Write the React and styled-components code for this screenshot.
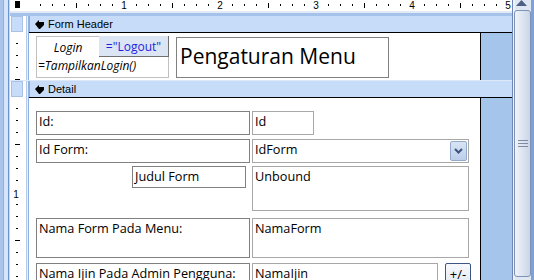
import React from 'react';
import styled, { createGlobalStyle } from 'styled-components';

const GlobalStyle = createGlobalStyle`
  html, body { margin: 0; padding: 0; background: #fff; overflow: hidden; }
  body { font-family: "Liberation Sans", Arial, sans-serif; }
`;

const Window = styled.div`
  width: 534px;
  height: 280px;
  display: flex;
  overflow: hidden;
  background: #fff;
`;

const Edge = styled.div`
  width: 10px;
  flex: none;
  background: linear-gradient(to right,
    #a9c4ec 0 3px, #8fb0e0 3px 4px, #d6e4f7 4px 8px, #6d94d2 8px 9px, #c9d9f0 9px 10px);
`;

const Designer = styled.div`
  flex: 1;
  min-width: 0;
  display: flex;
  flex-direction: column;
`;

const RulerRow = styled.div`
  display: flex;
  height: 11px;
  flex: none;
  border-bottom: 2px solid #e2eaf6;
`;

const Corner = styled.div`
  width: 19px;
  flex: none;
  display: flex;
  justify-content: center;
  padding-top: 1px;
  box-sizing: border-box;
  background: #fff;
`;

const FormSelector = styled.div`
  width: 5px;
  height: 7px;
  background: #000;
  margin-right: 4px;
`;

const HRuler = styled.svg`
  flex: 1;
  height: 11px;
  display: block;
`;

const BarRow = styled.div`
  display: flex;
  flex: none;
  height: ${p => p.$h}px;
  border-top: ${p => p.$top};
  background: #c6dcf8;
`;

const SelectorCell = styled.div`
  width: 19px;
  flex: none;
  box-sizing: border-box;
  padding: 0 6px 0 1px;
  background: linear-gradient(to right, #fff 0 16px, #b6cbea 16px 17px, #e8f0fa 17px 18px, #8fb0e0 18px 19px);
`;

const SelectorBox = styled.div`
  height: 100%;
  box-sizing: border-box;
  background: #c6dcf8;
  border: 1px solid #a9c1e4;
`;

const BarLabel = styled.div`
  flex: 1;
  display: flex;
  align-items: center;
  gap: 3px;
  padding-left: 5px;
  font-size: 11px;
  color: #000;
  border-left: 1px solid #8fb0e0;
`;

const SectionBody = styled.div`
  display: flex;
  flex: none;
  height: ${p => p.$h}px;
`;

const VRuler = styled.svg`
  width: 19px;
  flex: none;
  display: block;
  background: linear-gradient(to right, #fff 0 16px, #b6cbea 16px 17px, #e8f0fa 17px 18px, #8fb0e0 18px 19px);
`;

const Canvas = styled.div`
  flex: 1;
  position: relative;
  border-top: 1px solid #000;
  background: linear-gradient(to right, #fff 0 451px, #000 451px 452px, #a6c5ea 452px);
  font-family: "Open Sans", "Noto Sans", sans-serif;
`;

const Control = styled.div`
  position: absolute;
  left: ${p => p.$x}px;
  top: ${p => p.$y}px;
  width: ${p => p.$w}px;
  height: ${p => p.$h}px;
  box-sizing: border-box;
  border: 1px solid ${p => (p.$kind === 'label' ? '#808080' : '#a8a8a8')};
  font-size: 12.7px;
  line-height: 16px;
  padding: 1px 2px 0 2px;
  color: #000;
  white-space: nowrap;
  overflow: hidden;
`;

const LoginGroup = styled.div`
  position: absolute;
  left: 7px;
  top: 3px;
  width: 133px;
  height: 42px;
  box-sizing: border-box;
  border: 1px solid #c0c0c0;
  display: grid;
  grid-template-columns: 62px 1fr;
  grid-template-rows: 20px 1fr;
  font-size: 12px;
  font-style: italic;
`;

const LoginLabel = styled.div`
  display: flex;
  align-items: center;
  justify-content: center;
`;

const LogoutButton = styled.div`
  display: flex;
  align-items: center;
  justify-content: center;
  background: #dbe5f3;
  color: #1f1fe0;
  font-style: normal;
  font-size: 12px;
  border-right: 1px solid #707070;
  border-bottom: 1px solid #707070;
  margin: -1px -1px 0 0;
`;

const LoginExpr = styled.div`
  grid-column: 1 / span 2;
  padding: 0 1px;
  line-height: 18px;
`;

const Title = styled.div`
  position: absolute;
  left: 147px;
  top: 4px;
  width: 213px;
  height: 41px;
  box-sizing: border-box;
  border: 1px solid #808080;
  font-size: 21px;
  line-height: 36px;
  padding-left: 3px;
`;

const DropButton = styled.div`
  position: absolute;
  right: 1px;
  top: 1px;
  width: 17px;
  height: 20px;
  box-sizing: border-box;
  border: 1px solid #94aacb;
  border-radius: 2px;
  background: linear-gradient(#d8e4f4, #bccfe9);
  display: flex;
  align-items: center;
  justify-content: center;
`;

const CommandButton = styled.div`
  position: absolute;
  left: ${p => p.$x}px;
  top: ${p => p.$y}px;
  width: ${p => p.$w}px;
  height: ${p => p.$h}px;
  box-sizing: border-box;
  border: 1px solid #3d5683;
  border-radius: 2px;
  background: linear-gradient(#f7f9fc, #e1e8f2);
  font-size: 13px;
  line-height: 20px;
  text-align: center;
`;

const Scrollbar = styled.div`
  width: 22px;
  flex: none;
  display: flex;
  flex-direction: column;
  background: linear-gradient(to right, #6f86b6 0 1px, #eef3fa 1px 3px, #dfe7f2 3px 19px, #7da2d8 19px);
`;

const UpArrow = styled.div`
  height: 10px;
  flex: none;
  display: flex;
  justify-content: center;
  padding-right: 3px;
`;

const Thumb = styled.div`
  flex: 1;
  margin: 0 3px 3px 2px;
  border: 1px solid #7d92b9;
  border-radius: 3px;
  background: linear-gradient(to right, #f1f4f9, #dde5f0 50%, #c9d5e6);
  display: flex;
  align-items: center;
  justify-content: center;
`;

const Grip = () => (
  <svg width="10" height="7" viewBox="0 0 10 7">
    <rect x="0" y="0" width="10" height="1" fill="#7f8ba0" />
    <rect x="0" y="3" width="10" height="1" fill="#7f8ba0" />
    <rect x="0" y="6" width="10" height="1" fill="#7f8ba0" />
  </svg>
);

const SectionMark = () => (
  <svg width="10" height="9" viewBox="0 0 10 9">
    <path d="M0 4 L4 0 L4 2 L9 2 L9 5 L5 9 L4 9 Z" fill="#000" />
  </svg>
);

const Chevron = () => (
  <svg width="9" height="6" viewBox="0 0 9 6">
    <path d="M1 1 L4.5 4.5 L8 1" stroke="#3f5580" strokeWidth="2" fill="none" />
  </svg>
);

const TopRuler = () => {
  const ticks = [];
  for (let k = 1; k < 41; k++) {
    const x = -1 + k * 12;
    if (k % 8 === 0) {
      ticks.push(
        <text key={k} x={x} y="9" fontSize="10" textAnchor="middle" fontFamily="Liberation Sans, sans-serif">{k / 8}</text>
      );
    } else if (k % 4 === 0) {
      ticks.push(<rect key={k} x={x} y="3" width="1" height="5" fill="#000" />);
    } else {
      ticks.push(<rect key={k} x={x} y="4" width="1" height="2" fill="#000" />);
    }
  }
  return <HRuler>{ticks}</HRuler>;
};

const SideRuler = ({ h }) => {
  const ticks = [];
  for (let k = 1; k * 12 < h + 4; k++) {
    const y = k * 12 - 1;
    if (k % 8 === 0) {
      ticks.push(
        <text key={k} x="6" y={y + 6} fontSize="10" textAnchor="middle" fontFamily="Liberation Sans, sans-serif">{k / 8}</text>
      );
    } else if (k % 4 === 0) {
      ticks.push(<rect key={k} x="5" y={y} width="5" height="1" fill="#000" />);
    } else {
      ticks.push(<rect key={k} x="6" y={y} width="2" height="1" fill="#000" />);
    }
  }
  return <VRuler height={h}>{ticks}</VRuler>;
};

const SectionBar = ({ title, h, top }) => (
  <BarRow $h={h} $top={top}>
    <SelectorCell><SelectorBox /></SelectorCell>
    <BarLabel><SectionMark />{title}</BarLabel>
  </BarRow>
);

const detailControls = [
  { kind: 'label', text: 'Id:', x: 7, y: 13, w: 214, h: 24 },
  { kind: 'box', text: 'Id', x: 223, y: 13, w: 62, h: 24 },
  { kind: 'label', text: 'Id Form:', x: 7, y: 41, w: 214, h: 24 },
  { kind: 'combo', text: 'IdForm', x: 223, y: 41, w: 217, h: 24 },
  { kind: 'label', text: 'Judul Form', x: 103, y: 68, w: 114, h: 22 },
  { kind: 'box', text: 'Unbound', x: 223, y: 68, w: 217, h: 45 },
  { kind: 'label', text: 'Nama Form Pada Menu:', x: 7, y: 120, w: 214, h: 40 },
  { kind: 'box', text: 'NamaForm', x: 223, y: 120, w: 217, h: 40 },
  { kind: 'label', text: 'Nama Ijin Pada Admin Pengguna:', x: 7, y: 165, w: 214, h: 40 },
  { kind: 'box', text: 'NamaIjin', x: 223, y: 165, w: 186, h: 24 },
];

const App = () => (
  <>
    <GlobalStyle />
    <Window>
      <Edge />
      <Designer>
        <RulerRow>
          <Corner><FormSelector /></Corner>
          <TopRuler />
        </RulerRow>

        <SectionBar title="Form Header" h={16} top="3px solid #a4c2ea" />
        <SectionBody $h={48}>
          <SideRuler h={48} />
          <Canvas>
            <LoginGroup>
              <LoginLabel>Login</LoginLabel>
              <LogoutButton>="Logout"</LogoutButton>
              <LoginExpr>=TampilkanLogin()</LoginExpr>
            </LoginGroup>
            <Title>Pengaturan Menu</Title>
          </Canvas>
        </SectionBody>

        <SectionBar title="Detail" h={16} top="1px solid #dce7f7" />
        <SectionBody $h={200}>
          <SideRuler h={200} />
          <Canvas>
            {detailControls.map(c => (
              <Control key={c.text} $kind={c.kind} $x={c.x} $y={c.y} $w={c.w} $h={c.h}>
                {c.text}
                {c.kind === 'combo' && <DropButton><Chevron /></DropButton>}
              </Control>
            ))}
            <CommandButton $x={416} $y={165} $w={26} $h={24}>+/-</CommandButton>
          </Canvas>
        </SectionBody>
      </Designer>
      <Scrollbar>
        <UpArrow>
          <svg width="11" height="7" viewBox="0 0 11 7">
            <path d="M0 6 L5.5 0 L11 6 Z" fill="#4d6185" />
          </svg>
        </UpArrow>
        <Thumb><Grip /></Thumb>
      </Scrollbar>
    </Window>
  </>
);

export default App;
